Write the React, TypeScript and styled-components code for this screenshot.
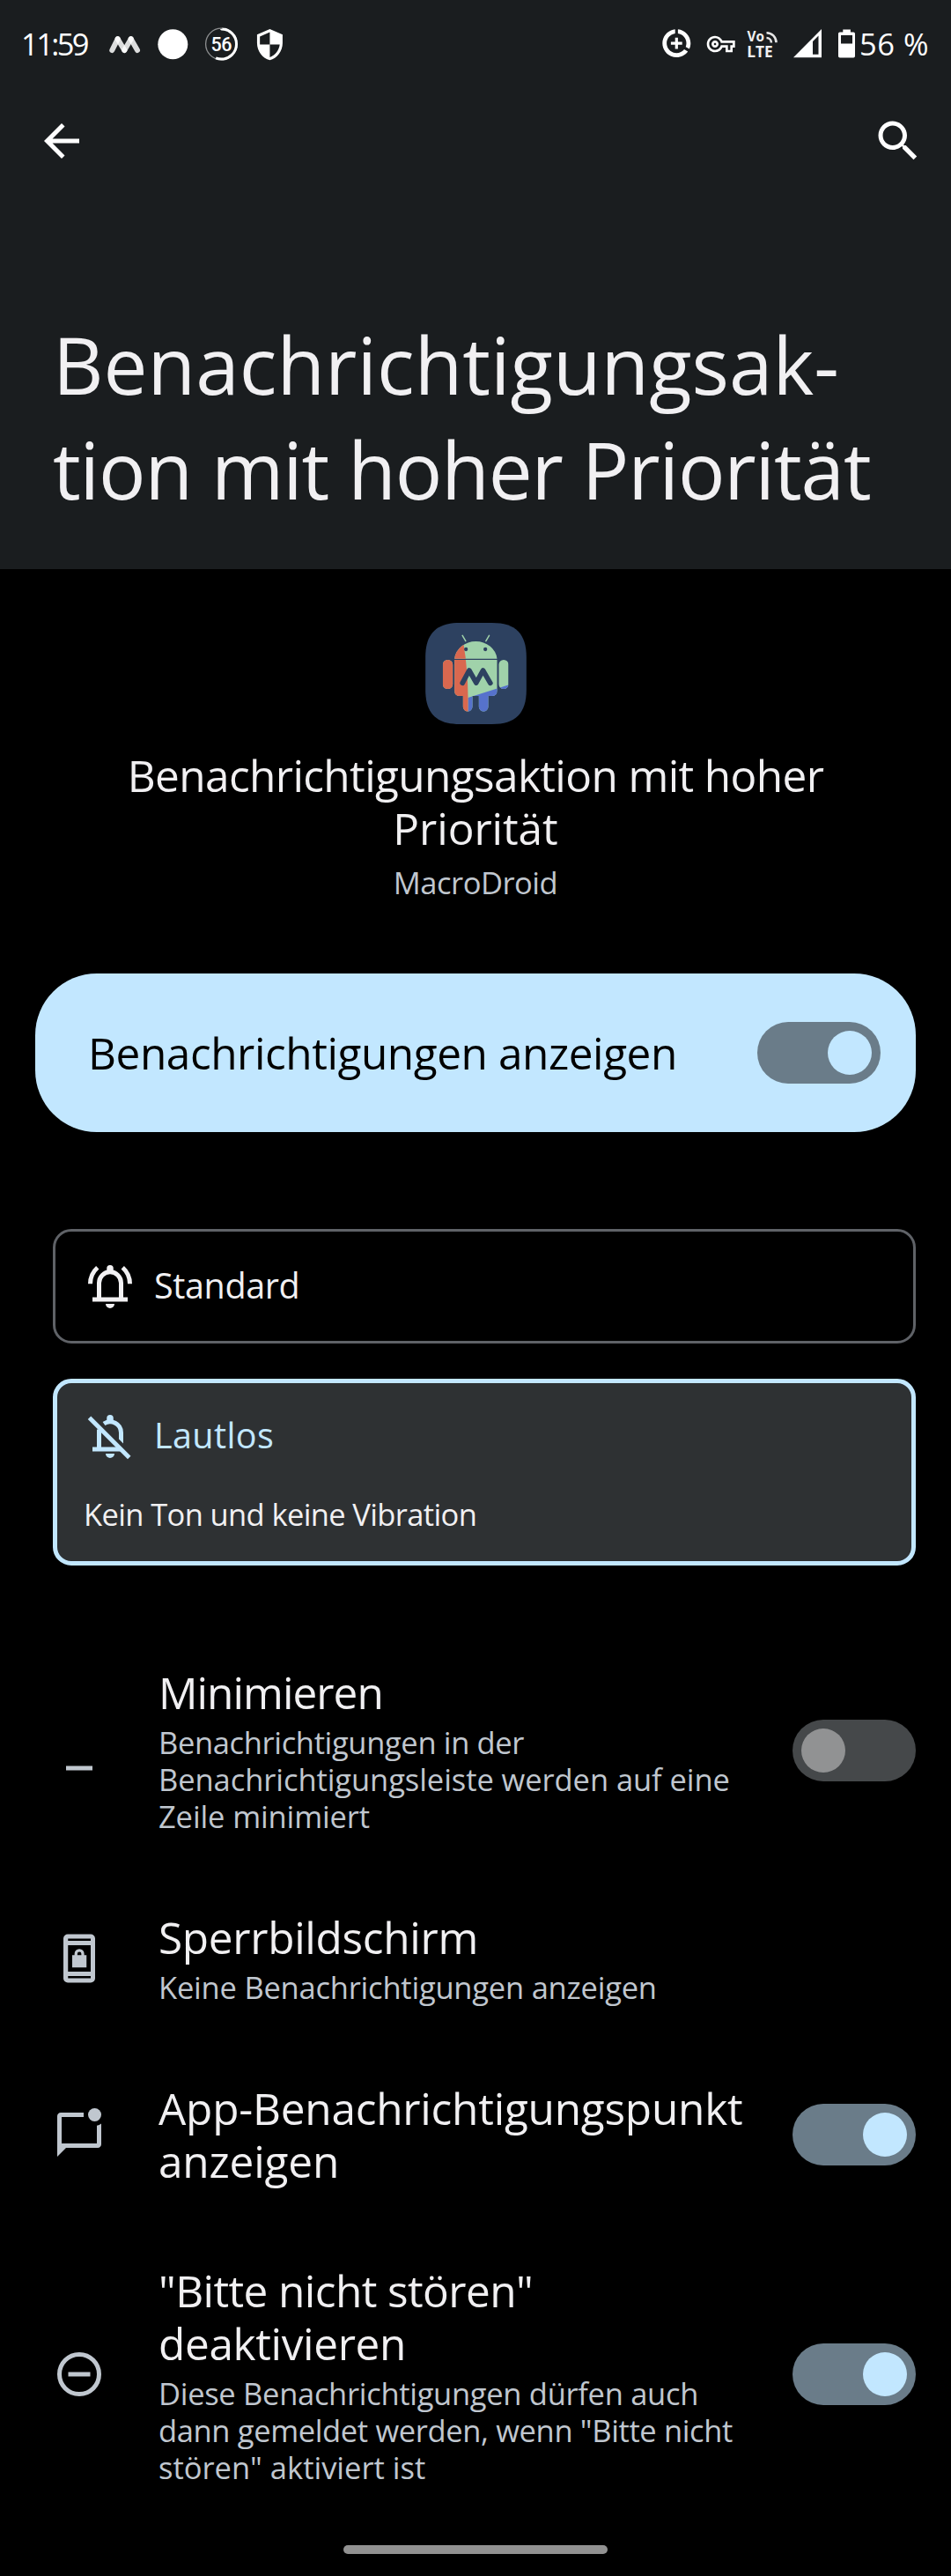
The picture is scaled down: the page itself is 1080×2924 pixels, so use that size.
import React from "react";
import styled, { createGlobalStyle } from "styled-components";

const color = {
  header: "#1a1d1f",
  text: "#f1f0f2",
  muted: "#c0c7cf",
  accent: "#c2e7ff",
  track: "#6a7c89",
};

const GlobalStyle = createGlobalStyle`
  * { box-sizing: border-box; }
  body {
    margin: 0;
    background: #000;
    color: ${color.text};
    font-family: "Open Sans", "Noto Sans", sans-serif;
  }
  svg { display: block; flex: none; }
`;

const Screen = styled.main`
  width: 1080px;
  min-height: 2924px;
  background: #000;
  display: flex;
  flex-direction: column;
`;

const Header = styled.header`
  height: 646px;
  background: ${color.header};
`;

const StatusBar = styled.div`
  height: 100px;
  padding-left: 24px;
  display: flex;
  align-items: center;
  justify-content: space-between;
  color: #fff;
  font-size: 34.5px;
  line-height: 42px;
`;

const StatusGroup = styled.div`
  display: flex;
  align-items: center;
`;

const Clock = styled.span`
  width: 90px;
  letter-spacing: -2.6px;
`;

const BatteryText = styled.span`
  width: 105px;
  padding-left: 1px;
  letter-spacing: 0.5px;
  white-space: nowrap;
`;

const Toolbar = styled.div`
  height: 120px;
  padding: 0 30px 0 40px;
  display: flex;
  align-items: center;
  justify-content: space-between;
  color: #fff;
`;

const IconButton = styled.button`
  width: 60px;
  height: 60px;
  padding: 0;
  border: 0;
  background: none;
  color: inherit;
`;

const Title = styled.h1`
  margin: 134px 0 0 60px;
  font-size: 89px;
  font-weight: 400;
  line-height: 119px;
`;

const Line = styled.span<{ $spacing: number }>`
  display: block;
  white-space: nowrap;
  letter-spacing: ${(p) => p.$spacing}px;
`;

const AppInfo = styled.section`
  padding-top: 61px;
  display: flex;
  flex-direction: column;
  align-items: center;
  text-align: center;
`;

const ChannelName = styled.h2`
  margin: 28px 0 0;
  font-size: 49.5px;
  font-weight: 400;
  line-height: 60px;
`;

const AppName = styled.p`
  margin: 11px 0 0;
  font-size: 34.5px;
  line-height: 42px;
  color: ${color.muted};
`;

const Banner = styled.section`
  margin: 82px 40px 0;
  height: 180px;
  padding: 0 40px 0 60px;
  border-radius: 70px;
  background: ${color.accent};
  color: #000;
  display: flex;
  align-items: center;
  justify-content: space-between;
  font-size: 49.5px;
  line-height: 60px;
`;

const SwitchTrack = styled.div<{ $on: boolean }>`
  flex: none;
  width: 140px;
  height: 70px;
  padding: 10px;
  border-radius: 35px;
  display: flex;
  justify-content: ${(p) => (p.$on ? "flex-end" : "flex-start")};
  background: ${(p) => (p.$on ? color.track : "#45484a")};
`;

const SwitchKnob = styled.div<{ $on: boolean }>`
  width: 50px;
  height: 50px;
  border-radius: 50%;
  background: ${(p) => (p.$on ? color.accent : "#919293")};
`;

const Choices = styled.section`
  margin: 110px 40px 0 60px;
  display: flex;
  flex-direction: column;
  gap: 40px;
`;

const Choice = styled.div<{ $selected?: boolean }>`
  height: ${(p) => (p.$selected ? 212 : 130)}px;
  border: ${(p) => (p.$selected ? `5px solid ${color.accent}` : "3px solid #5f6267")};
  padding: ${(p) => (p.$selected ? "30px 30px 0" : "32px 32px 0")};
  border-radius: 21px;
  background: ${(p) => (p.$selected ? "#2e3133" : "#000")};
`;

const ChoiceHead = styled.div<{ $selected?: boolean }>`
  height: 60px;
  display: flex;
  align-items: center;
  gap: 20px;
  color: ${(p) => (p.$selected ? color.accent : color.text)};
`;

const ChoiceLabel = styled.div`
  padding-bottom: 2px;
  font-size: 39.5px;
  line-height: 54px;
`;

const ChoiceNote = styled.p`
  margin: 38px 0 0;
  font-size: 34.5px;
  line-height: 42px;
`;

const Settings = styled.section`
  margin-top: 70px;
  display: flex;
  flex-direction: column;
`;

const Row = styled.div`
  padding: 43px 40px 42.2px 60px;
  display: flex;
  align-items: center;
`;

const RowIcon = styled.div`
  width: 120px;
  color: ${color.muted};
`;

const RowText = styled.div`
  flex: 1;
  min-width: 0;
  padding-top: 1px;
`;

const RowTitle = styled.div`
  font-size: 49.5px;
  line-height: 60px;
`;

const RowNote = styled.div`
  margin-top: 6px;
  font-size: 34.5px;
  line-height: 42px;
  color: ${color.muted};
`;

const HomeHandle = styled.div`
  align-self: center;
  margin-top: 25px;
  width: 300px;
  height: 10px;
  border-radius: 5px;
  background: #919191;
`;

const Icon = ({ children }: { children: React.ReactNode }) => (
  <svg width="60" height="60" viewBox="0 0 24 24" fill="currentColor">
    {children}
  </svg>
);

const Switch = ({ on }: { on: boolean }) => (
  <SwitchTrack $on={on} role="switch" aria-checked={on}>
    <SwitchKnob $on={on} />
  </SwitchTrack>
);

type TextLine = [text: string, spacing: number];

const Lines = ({ lines }: { lines: TextLine[] }) => (
  <>
    {lines.map(([text, spacing]) => (
      <Line key={text} $spacing={spacing}>
        {text}
      </Line>
    ))}
  </>
);

const NotificationIcons = () => (
  <>
    <svg width="55" height="50" viewBox="114 25 55 50" stroke="#fff" strokeWidth="6" strokeLinecap="round" strokeOpacity="0.85">
      <path d="M127.3 57L133.7 44.2" />
      <path d="M133.7 44.2L141.3 57" />
      <path d="M141.3 57L148.7 44.2" />
      <path d="M148.7 44.2L156 57" />
    </svg>
    <svg width="55" height="50" viewBox="169 25 55 50">
      <circle cx="196.3" cy="50.3" r="17" fill="#fff" />
    </svg>
    <svg width="55" height="50" viewBox="224 25 55 50">
      <circle cx="251.4" cy="50" r="17.8" fill="none" stroke="#8d8f90" strokeWidth="1.3" />
      <circle cx="251.4" cy="50" r="17.1" fill="none" stroke="#fff" strokeWidth="3" pathLength="100" strokeDasharray="56 44" transform="rotate(-90 251.4 50)" />
      <text x="251.4" y="58" fill="#fff" fontFamily="Roboto" fontWeight="500" fontSize="21.5" textAnchor="middle" textLength="24">56</text>
    </svg>
    <svg width="55" height="50" viewBox="279 25 55 50">
      <path
        transform="translate(287.1 31.3) scale(1.61)"
        fill="#fff"
        d="M12 1L3 5v6c0 5.55 3.84 10.74 9 12 5.16-1.26 9-6.45 9-12V5l-9-4zm0 10.99h7c-.53 4.12-3.28 7.79-7 8.94V12H5V6.3l7-3.11v8.8z"
      />
    </svg>
  </>
);

const SystemIcons = () => (
  <>
    <svg width="50" height="50" viewBox="743 25 50 50">
      <path
        transform="translate(749.1 29.9) scale(1.6)"
        fill="#fff"
        d="M11 8v3H8v2h3v3h2v-3h3v-2h-3V8h-2zm2-5.95v3.03c3.39.49 6 3.39 6 6.92 0 .9-.18 1.75-.48 2.54l2.6 1.53c.56-1.24.88-2.62.88-4.07 0-5.18-3.95-9.45-9-9.95zM12 19c-3.87 0-7-3.13-7-7 0-3.53 2.61-6.43 6-6.92V2.05c-5.06.5-9 4.76-9 9.95 0 5.52 4.47 10 9.99 10 3.31 0 6.24-1.61 8.06-4.09l-2.6-1.53C16.17 17.98 14.21 19 12 19z"
      />
    </svg>
    <svg width="50" height="50" viewBox="793 25 50 50">
      <path
        transform="translate(802.7 34) scale(1.333)"
        fill="#fff"
        d="M22 19h-6v-4h-2.68c-1.14 2.42-3.6 4-6.32 4-3.86 0-7-3.14-7-7s3.14-7 7-7c2.72 0 5.17 1.58 6.32 4H24v6h-2v4zm-4-2h2v-4h2v-2H11.94l-.23-.67C11.01 8.34 9.11 7 7 7c-2.76 0-5 2.24-5 5s2.24 5 5 5c2.11 0 4.01-1.34 4.71-3.33l.23-.67H18v4zM7 15c-1.65 0-3-1.35-3-3s1.35-3 3-3 3 1.35 3 3-1.35 3-3 3zm0-4c-.55 0-1 .45-1 1s.45 1 1 1 1-.45 1-1-.45-1-1-1z"
      />
    </svg>
    <svg width="50" height="50" viewBox="843 25 50 50" fill="#f0f0f0" fontFamily="Open Sans" fontWeight="700">
      <text x="848.6" y="47" fontSize="16.5" textLength="19.5" lengthAdjust="spacingAndGlyphs">Vo</text>
      <text x="848.2" y="65" fontSize="18" textLength="29.5" lengthAdjust="spacingAndGlyphs">LTE</text>
      <path d="M870.5 37.2a11 11 0 0 1 11 11M870.5 43a5.4 5.4 0 0 1 5.4 5.4" fill="none" stroke="#e6e6e6" strokeWidth="2.6" />
    </svg>
    <svg width="50" height="50" viewBox="893 25 50 50">
      <path fill="#fff" fillRule="evenodd" d="M901 65.2L933 33v32.2zM923 47v14.8h6.5V40.6z" />
    </svg>
    <svg width="32" height="50" viewBox="943 25 32 50">
      <path
        fill="#fff"
        fillRule="evenodd"
        d="M957.3 33.5h8.6v3h3.3q1.8 0 1.8 1.8v25.4q0 1.8-1.8 1.8h-15.4q-1.8 0-1.8-1.8V38.3q0-1.8 1.8-1.8h3.5zM955 40v9.6h13V40z"
      />
    </svg>
  </>
);

const Logo = () => (
  <svg width="115" height="115" viewBox="68 51 344 345">
    <defs>
      <clipPath id="robot">
        <path d="M167 173A73 67 0 0 1 312 173Z" />
        <path d="M167 177H312V282Q312 300 294 300H185Q167 300 167 282Z" />
        <rect x="127" y="177" width="34" height="99" rx="16" />
        <rect x="318" y="177" width="33" height="99" rx="16" />
        <rect x="196" y="280" width="32" height="73" rx="16" />
        <rect x="250" y="280" width="32" height="73" rx="16" />
      </clipPath>
    </defs>
    <path
      fill="#2d4160"
      d="M185 51H295C375 51 412 88 412 168V279C412 359 375 396 295 396H185C105 396 68 359 68 279V168C68 88 105 51 185 51Z"
    />
    <g clipPath="url(#robot)">
      <rect x="120" y="90" width="240" height="270" fill="#a0d2aa" />
      <path d="M213 306L360 259V360H213Z" fill="#5672cc" />
      <path d="M192 90Q212 190 213 306V360H110V90Z" fill="#d9684f" />
    </g>
    <path d="M194 94L205 113M285 94L274 113" stroke="#a0d2aa" strokeWidth="4.5" strokeLinecap="round" />
    <circle cx="206" cy="141" r="6.5" fill="#2d4160" />
    <circle cx="272" cy="141" r="6.5" fill="#2d4160" />
    <path d="M194 256L217 213L241 255L264 213L289 256" fill="none" stroke="#2d4160" strokeWidth="17" strokeLinecap="round" strokeLinejoin="round" />
  </svg>
);

const BellIcon = () => (
  <Icon>
    <path d="M7 18V10.5a5 5 0 0 1 10 0V18" fill="none" stroke="currentColor" strokeWidth="2" />
    <path d="M3 10.9C3 8 4.2 5.4 6.3 3.5M21 10.9C21 8 19.8 5.4 17.7 3.5" fill="none" stroke="currentColor" strokeWidth="2" />
    <path d="M4 17h16v2H4zM10 20h4a2 2 0 0 1-4 0zM10.5 5V3.9a1.5 1.5 0 0 1 3 0V5z" />
  </Icon>
);

const BellOffIcon = () => (
  <Icon>
    <path d="M7 17.5V9M9.2 6.4A5 5 0 0 1 17 10.5V11" fill="none" stroke="currentColor" strokeWidth="2" />
    <path d="M2.6 3.7L20.7 21.8" stroke="currentColor" strokeWidth="1.95" />
    <path d="M16 10.8h2v4.6l-2-2zM4 17h13l2 2H4zM10 20h4a2 2 0 0 1-4 0zM10.5 5V3.9a1.5 1.5 0 0 1 3 0V5z" />
  </Icon>
);

const MinimizeIcon = () => (
  <Icon>
    <path d="M6 19h12v2H6z" />
  </Icon>
);

const LockScreenIcon = () => (
  <Icon>
    <path
      fillRule="evenodd"
      d="M6.8 1h10.4a2 2 0 0 1 2 2v18a2 2 0 0 1-2 2H6.8a2 2 0 0 1-2-2V3a2 2 0 0 1 2-2zM6.9 3v1h10.3V3zM6.9 6v12h10.3V6zM6.9 20v1h10.3v-1z"
    />
    <path d="M8.8 10.5h6.5v5.6H8.8z" />
    <path d="M10.5 11V9.9a1.55 1.55 0 0 1 3.1 0V11" fill="none" stroke="currentColor" strokeWidth="1.3" />
  </Icon>
);

const BadgeIcon = () => (
  <Icon>
    <path d="M22 6.98V16.4c0 .9-.7 1.6-1.6 1.6H6l-4 4V3.6C2 2.7 2.7 2 3.6 2H14v2H4v12h16V7.9c.74-.15 1.42-.48 2-.92z" />
    <circle cx="19" cy="3" r="3" />
  </Icon>
);

const DndIcon = () => (
  <Icon>
    <circle cx="12" cy="12" r="9" fill="none" stroke="currentColor" strokeWidth="2" />
    <path d="M7 11h10v2H7z" />
  </Icon>
);

type Setting = { icon: React.ReactNode; title: TextLine[]; note?: TextLine[]; on?: boolean };

const settings: Setting[] = [
  {
    icon: <MinimizeIcon />,
    title: [["Minimieren", -0.95]],
    note: [
      ["Benachrichtigungen in der", -0.35],
      ["Benachrichtigungsleiste werden auf eine", -0.07],
      ["Zeile minimiert", -0.12],
    ],
    on: false,
  },
  {
    icon: <LockScreenIcon />,
    title: [["Sperrbildschirm", -0.3]],
    note: [["Keine Benachrichtigungen anzeigen", -0.22]],
  },
  {
    icon: <BadgeIcon />,
    title: [
      ["App-Benachrichtigungspunkt", -0.22],
      ["anzeigen", -0.15],
    ],
    on: true,
  },
  {
    icon: <DndIcon />,
    title: [
      ['"Bitte nicht stören"', -0.58],
      ["deaktivieren", -0.34],
    ],
    note: [
      ["Diese Benachrichtigungen dürfen auch", -0.3],
      ['dann gemeldet werden, wenn "Bitte nicht', -0.36],
      ['stören" aktiviert ist', 0],
    ],
    on: true,
  },
];

export default function App() {
  return (
    <Screen>
      <GlobalStyle />
      <Header>
        <StatusBar>
          <StatusGroup>
            <Clock>11:59</Clock>
            <NotificationIcons />
          </StatusGroup>
          <StatusGroup>
            <SystemIcons />
            <BatteryText>56 %</BatteryText>
          </StatusGroup>
        </StatusBar>
        <Toolbar>
          <IconButton aria-label="Zurück">
            <Icon>
              <path d="M20 11H7.83l5.59-5.59L12 4l-8 8 8 8 1.41-1.41L7.83 13H20v-2z" />
            </Icon>
          </IconButton>
          <IconButton aria-label="Suchen">
            <Icon>
              <path d="M15.5 14h-.79l-.28-.27C15.41 12.59 16 11.11 16 9.5 16 5.91 13.09 3 9.5 3S3 5.91 3 9.5 5.91 16 9.5 16c1.61 0 3.09-.59 4.23-1.57l.27.28v.79l5 4.99L20.49 19l-4.99-5zm-6 0C7.01 14 5 11.99 5 9.5S7.01 5 9.5 5 14 7.01 14 9.5 11.99 14 9.5 14z" />
            </Icon>
          </IconButton>
        </Toolbar>
        <Title>
          <Lines lines={[["Benachrichtigungsak-", 0.05], ["tion mit hoher Priorität", -1.1]]} />
        </Title>
      </Header>

      <AppInfo>
        <Logo />
        <ChannelName>
          <Lines lines={[["Benachrichtigungsaktion mit hoher", -0.61], ["Priorität", -0.06]]} />
        </ChannelName>
        <AppName>
          <Lines lines={[["MacroDroid", -0.5]]} />
        </AppName>
      </AppInfo>

      <Banner>
        <Line $spacing={-0.43}>Benachrichtigungen anzeigen</Line>
        <Switch on />
      </Banner>

      <Choices>
        <Choice>
          <ChoiceHead>
            <BellIcon />
            <ChoiceLabel>
              <Line $spacing={-0.38}>Standard</Line>
            </ChoiceLabel>
          </ChoiceHead>
        </Choice>
        <Choice $selected>
          <ChoiceHead $selected>
            <BellOffIcon />
            <ChoiceLabel>
              <Line $spacing={0.4}>Lautlos</Line>
            </ChoiceLabel>
          </ChoiceHead>
          <ChoiceNote>
            <Line $spacing={-0.63}>Kein Ton und keine Vibration</Line>
          </ChoiceNote>
        </Choice>
      </Choices>

      <Settings>
        {settings.map(({ icon, title, note, on }) => (
          <Row key={title[0][0]}>
            <RowIcon>{icon}</RowIcon>
            <RowText>
              <RowTitle>
                <Lines lines={title} />
              </RowTitle>
              {note && (
                <RowNote>
                  <Lines lines={note} />
                </RowNote>
              )}
            </RowText>
            {on !== undefined && <Switch on={on} />}
          </Row>
        ))}
      </Settings>

      <HomeHandle />
    </Screen>
  );
}
